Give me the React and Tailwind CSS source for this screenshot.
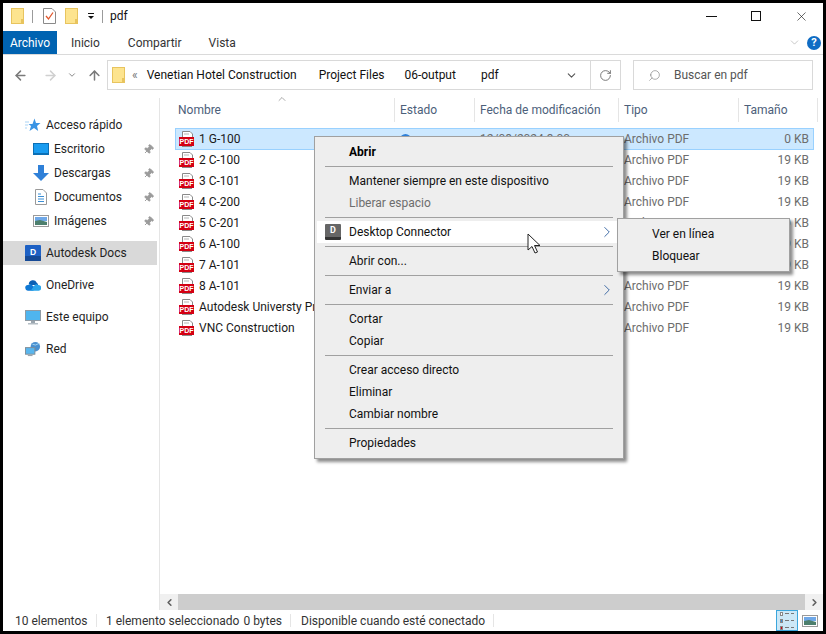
import React from 'react';
import { ChevronRight, ChevronDown, ChevronUp, ChevronLeft, ArrowLeft, ArrowRight, ArrowUp, RotateCw, Search, X, Pin } from 'lucide-react';

const files = [
  { name: '1 G-100', size: '0 KB', selected: true },
  { name: '2 C-100', size: '19 KB' },
  { name: '3 C-101', size: '19 KB' },
  { name: '4 C-200', size: '19 KB' },
  { name: '5 C-201', size: '19 KB' },
  { name: '6 A-100', size: '19 KB' },
  { name: '7 A-101', size: '19 KB' },
  { name: '8 A-101', size: '19 KB' },
  { name: 'Autodesk Universty Presentation', size: '19 KB' },
  { name: 'VNC Construction', size: '19 KB' },
];

const Folder = ({ className = '' }) => (
  <svg width="14" height="16" viewBox="0 0 14 16" className={className}>
    <rect x="0.5" y="0.5" width="12" height="15" fill="#fde48f" stroke="#e8c45e" />
    <rect x="10" y="11" width="3" height="5" fill="#e8c45e" />
  </svg>
);

const PdfIcon = () => (
  <svg width="16" height="16" viewBox="0 0 16 16" className="shrink-0">
    <path d="M3.5 0.5H11L13.5 3V7H3.5Z" fill="#fff" stroke="#8a8a8a" />
    <line x1="5" y1="3" x2="10" y2="3" stroke="#b5b5b5" />
    <rect x="0" y="6" width="15" height="9" fill="#d40012" />
    <text x="7.5" y="13.2" textAnchor="middle" fontSize="7" fontWeight="700" fill="#fff" fontFamily="Liberation Sans, sans-serif">PDF</text>
    <rect x="3" y="15" width="10" height="1" fill="#8a8a8a" />
  </svg>
);

const Star = () => (
  <svg width="16" height="16" viewBox="0 0 16 16">
    <path d="M9.5 1.5L11 6H15.5L12 9L13.2 14L9 11L4.5 14L6 9L3.5 7H7.5Z" fill="#3a94e4" />
    <path d="M0 5H4M0 8H3M0 11H2" stroke="#a9d3f5" />
  </svg>
);

const Desktop = () => (
  <svg width="16" height="14" viewBox="0 0 16 14">
    <rect x="0.5" y="1.5" width="15" height="11" fill="#1a9cf0" stroke="#0b6fb5" />
    <rect x="1" y="11" width="14" height="1" fill="#0b6fb5" />
  </svg>
);

const Download = () => (
  <svg width="16" height="16" viewBox="0 0 16 16">
    <path d="M5 0H11V8H16L8 16L0 8H5Z" fill="#2f80d8" />
  </svg>
);

const Doc = () => (
  <svg width="12" height="16" viewBox="0 0 12 16">
    <path d="M0.5 0.5H8L11.5 4V15.5H0.5Z" fill="#fff" stroke="#9a9a9a" />
    <path d="M3 5H6M3 7.5H9M3 10H9M3 12.5H9" stroke="#3b8fd6" />
  </svg>
);

const Picture = () => (
  <svg width="16" height="12" viewBox="0 0 16 12">
    <rect x="0.5" y="0.5" width="15" height="11" fill="#fff" stroke="#9a9a9a" />
    <rect x="2" y="2" width="12" height="4" fill="#6fa8e8" />
    <path d="M2 6L7 5L14 7V10H2Z" fill="#4d7f6d" />
  </svg>
);

const AutodeskDocs = () => (
  <svg width="16" height="16" viewBox="0 0 16 16">
    <rect width="16" height="16" rx="1" fill="#1e61c4" />
    <rect y="11" width="16" height="5" fill="#164a96" />
    <text x="8" y="9.5" textAnchor="middle" fontSize="8.5" fontWeight="700" fill="#fff" fontFamily="Liberation Sans, sans-serif">D</text>
  </svg>
);

const OneDrive = () => (
  <svg width="17" height="12" viewBox="0 0 17 12">
    <path d="M4 5a4.5 4.5 0 0 1 8.5-1.5A3.5 3.5 0 0 1 14 6H6Z" fill="#0a5fb4" />
    <path d="M3.5 12A3 3 0 0 1 3 6L6 5L10 8L9 12Z" fill="#0f78d4" />
    <path d="M6 12L10 6.5A3 3 0 0 1 14 6A3 3 0 0 1 14.5 12Z" fill="#2aa4ea" />
  </svg>
);

const Monitor = () => (
  <svg width="16" height="15" viewBox="0 0 16 15">
    <rect x="0.5" y="0.5" width="15" height="10" fill="#4fb5ef" stroke="#8f9ba5" />
    <rect x="6" y="11" width="4" height="2" fill="#9aa5ae" />
    <rect x="3" y="13" width="10" height="1.5" fill="#b4bdc4" />
  </svg>
);

const Network = () => (
  <svg width="17" height="17" viewBox="0 0 17 17">
    <circle cx="11" cy="5.5" r="5" fill="#4a90d0" />
    <path d="M8 3Q11 5 15 2" stroke="#a5d6f2" fill="none" />
    <rect x="0.5" y="6.5" width="10" height="7" fill="#59b6ee" stroke="#7f8c96" />
    <rect x="3" y="14" width="5" height="1.5" fill="#9aa5ae" />
  </svg>
);

const NavItem = ({ icon, label, pinned, active, className = '' }) => (
  <div className={`flex h-6 items-center ${active ? 'mr-[2px] bg-[#d9d9d9]' : ''} ${className}`}>
    <span className="flex w-4 items-center justify-center">{icon}</span>
    <span className="ml-[5px] flex-1 text-[#1f1f1f]">{label}</span>
    {pinned && <Pin size={11} className="mr-[3px] rotate-45 fill-[#9b9b9b] text-[#9b9b9b]" />}
  </div>
);

const Sep = () => (
  <div className="flex h-[7px] items-center pl-[8px] pr-[4px]">
    <div className="h-px w-full bg-[#a0a0a0]" />
  </div>
);

const MenuItem = ({ label, bold, disabled, active, arrow, icon }) => (
  <div className={`relative flex h-[22px] items-center pl-[32px] ${active ? 'bg-white' : ''}`}>
    {icon && <span className="absolute left-[8px] top-[3px]">{icon}</span>}
    <span className={`${bold ? 'font-bold text-black' : disabled ? 'text-[#6d6d6d]' : 'text-[#111]'}`}>{label}</span>
    {arrow && <ChevronRight size={18} strokeWidth={1.2} className="absolute right-[1px] top-[2px] text-[#2f5f9e]" />}
  </div>
);

const CursorArrow = () => (
  <svg width="14" height="21" viewBox="0 0 14 21">
    <path d="M1 1V17L5 13.5L8 20L10.5 19L7.5 12.5H13Z" fill="#fff" stroke="#222" strokeWidth="1" strokeLinejoin="miter" />
  </svg>
);

export default function App() {
  return (
    <div className="flex h-[634px] w-[826px] flex-col overflow-hidden bg-black p-[3px] font-['Roboto',sans-serif] text-[12px] leading-none">
      <div className="relative flex min-h-0 flex-1 flex-col bg-white">
        {/* Title bar */}
        <div className="flex h-[28px] shrink-0 items-center pb-[2px]">
          <Folder className="ml-2" />
          <div className="ml-[7px] h-[13px] w-px bg-[#9b9b9b]" />
          <svg width="13" height="16" viewBox="0 0 13 16" className="ml-[10px]">
            <path d="M0.5 0.5H9L12.5 4V15.5H0.5Z" fill="#fff" stroke="#8a8a8a" />
            <path d="M3 8L5.5 11L10 4.5" stroke="#e0562b" strokeWidth="1.3" fill="none" />
          </svg>
          <Folder className="ml-[9px]" />
          <svg width="8" height="8" viewBox="0 0 8 8" className="ml-[8px]">
            <rect x="1" y="1" width="6" height="1" fill="#111" />
            <path d="M1 4H7L4 7Z" fill="#111" />
          </svg>
          <div className="ml-[7px] h-[13px] w-px bg-[#9b9b9b]" />
          <span className="ml-[7px] text-[#111]">pdf</span>
          <div className="ml-auto flex items-center">
            <div className="h-px w-[11px] bg-[#111]" />
            <div className="ml-[34px] h-[10px] w-[10px] border border-[#111]" />
            <X size={15} strokeWidth={1} className="ml-[33px] mr-[14px] text-[#111]" />
          </div>
        </div>

        {/* Ribbon tabs */}
        <div className="flex h-[24px] shrink-0 items-stretch border-b border-[#dadada]">
          <div className="flex w-[54px] items-center justify-center bg-[#0063b1] text-white">Archivo</div>
          <span className="ml-[14px] flex items-center text-[#333]">Inicio</span>
          <span className="ml-[28px] flex items-center text-[#333]">Compartir</span>
          <span className="ml-[27px] flex items-center text-[#333]">Vista</span>
          <div className="ml-auto flex items-center">
            <ChevronDown size={13} strokeWidth={1} className="text-[#9b9b9b]" />
            <div className="ml-[6px] mr-[2px] flex h-[14px] w-[14px] items-center justify-center rounded-full bg-[#0f6cc4] text-[11px] font-bold text-white">?</div>
          </div>
        </div>

        {/* Address bar */}
        <div className="flex h-[43px] shrink-0 items-start pt-[5px]">
          <div className="flex h-[30px] items-center">
            <ArrowLeft size={15} strokeWidth={2.4} className="ml-[10px] text-[#7a7a7a]" />
            <ArrowRight size={15} strokeWidth={2.4} className="ml-[15px] text-[#d0d0d0]" />
            <ChevronDown size={10} strokeWidth={2.4} className="ml-[9px] text-[#8a8a8a]" />
            <ArrowUp size={15} strokeWidth={2.4} className="ml-[10px] text-[#7a7a7a]" />
          </div>
          <div className="ml-[5px] flex h-[30px] w-[514px] items-center border border-[#d9d9d9]">
            <Folder className="ml-[4px]" />
            <span className="ml-[6px] text-[#777]">«</span>
            <span className="ml-[9px] text-[#111]">Venetian Hotel Construction</span>
            <span className="ml-[22px] text-[#111]">Project Files</span>
            <span className="ml-[20px] text-[#111]">06-output</span>
            <span className="ml-[25px] text-[#111]">pdf</span>
            <ChevronDown size={13} strokeWidth={2} className="ml-auto mr-[12px] text-[#555]" />
            <div className="flex h-full w-[30px] items-center justify-center border-l border-[#d9d9d9]">
              <RotateCw size={13} strokeWidth={1.6} className="text-[#666]" />
            </div>
          </div>
          <div className="ml-[12px] flex h-[30px] w-[180px] items-center border border-[#d9d9d9]">
            <Search size={13} strokeWidth={1} className="ml-[14px] -scale-x-100 text-[#666]" />
            <span className="ml-[13px] text-[#555]">Buscar en pdf</span>
          </div>
        </div>

        {/* Body */}
        <div className="flex min-h-0 flex-1">
          <div className="flex w-[157px] shrink-0 flex-col border-r border-[#e5e5e5] pt-[15px]">
            <NavItem icon={<Star />} label="Acceso rápido" className="pl-[22px]" />
            <NavItem icon={<Desktop />} label="Escritorio" pinned className="pl-[30px] pr-[2px]" />
            <NavItem icon={<Download />} label="Descargas" pinned className="pl-[30px] pr-[2px]" />
            <NavItem icon={<Doc />} label="Documentos" pinned className="pl-[30px] pr-[2px]" />
            <NavItem icon={<Picture />} label="Imágenes" pinned className="pl-[30px] pr-[2px]" />
            <NavItem icon={<AutodeskDocs />} label="Autodesk Docs" active className="mt-2 pl-[22px]" />
            <NavItem icon={<OneDrive />} label="OneDrive" className="mt-2 pl-[22px]" />
            <NavItem icon={<Monitor />} label="Este equipo" className="mt-2 pl-[22px]" />
            <NavItem icon={<Network />} label="Red" className="mt-2 pl-[22px]" />
          </div>

          <div className="flex min-w-0 flex-1 flex-col">
            <div className="relative flex-1 pl-[15px]">
              <ChevronUp size={12} strokeWidth={1} className="absolute left-[116px] top-[-5px] text-[#555]" />
              {/* Column header */}
              <div className="grid h-[24px] w-[643px] grid-cols-[219px_80px_144px_120px_80px] text-[#4c607a]">
                <div className="flex items-center pl-[3px]">Nombre</div>
                <div className="flex items-center border-l border-[#e5e5e5] pl-[5px]">Estado</div>
                <div className="flex items-center border-l border-[#e5e5e5] pl-[5px]">Fecha de modificación</div>
                <div className="flex items-center border-l border-[#e5e5e5] pl-[5px]">Tipo</div>
                <div className="flex items-center border-x border-[#e5e5e5] pl-[5px]">Tamaño</div>
              </div>
              <div className="mt-[6px] flex w-[639px] flex-col">
                {files.map((f) => (
                  <div
                    key={f.name}
                    className={`-mb-px grid h-[22px] grid-cols-[219px_80px_144px_120px_74px] items-center border ${f.selected ? 'relative border-[#99d1ff] bg-[#cce8ff]' : 'border-transparent'}`}
                  >
                    <div className="flex items-center overflow-hidden pl-[3px]">
                      <PdfIcon />
                      <span className="ml-[4px] whitespace-nowrap text-[#1a1a1a]">{f.name}</span>
                    </div>
                    <div className="pl-[5px]">
                      {f.selected && <div className="h-[11px] w-[11px] rounded-full border-2 border-[#2f80d8]" />}
                    </div>
                    <div className="pl-[5px] text-[#6d6d6d]">{f.selected ? '12/08/2024 3:00' : ''}</div>
                    <div className="pl-[5px] text-[#6d6d6d]">Archivo PDF</div>
                    <div className="pr-[4px] text-right text-[#6d6d6d]">{f.size}</div>
                  </div>
                ))}
              </div>
            </div>
            {/* Horizontal scrollbar */}
            <div className="flex h-[16px] shrink-0 items-stretch bg-[#f0f0f0]">
              <div className="flex w-[18px] items-center justify-center">
                <ChevronLeft size={11} strokeWidth={3.5} className="text-[#606060]" />
              </div>
              <div className="flex-1 bg-[#cdcdcd]" />
              <div className="flex w-[18px] items-center justify-center">
                <ChevronRight size={11} strokeWidth={3.5} className="text-[#606060]" />
              </div>
            </div>
          </div>
        </div>

        {/* Status bar */}
        <div className="flex h-[21px] shrink-0 items-center text-[#333]">
          <span className="ml-3 w-[81px]">10 elementos</span>
          <div className="h-[13px] w-px bg-[#e5e5e5]" />
          <span className="ml-[9px] flex w-[184px] gap-[4px]">
            <span>1 elemento seleccionado</span>
            <span>0 bytes</span>
          </span>
          <div className="h-[13px] w-px bg-[#e5e5e5]" />
          <span className="ml-[10px] w-[192px]">Disponible cuando esté conectado</span>
          <div className="h-[13px] w-px bg-[#e5e5e5]" />
          <div className="ml-auto mr-[5px] flex h-full items-center">
            <div className="flex h-full w-[22px] flex-col justify-center gap-[3px] border border-[#3ba6dc] bg-[#cce8f7] px-[3px]">
              <div className="flex items-center gap-[2px]"><div className="h-[4px] w-[4px] border border-[#888] bg-white" /><div className="h-px w-[5px] bg-[#777]" /><div className="h-px w-[5px] bg-[#777]" /></div>
              <div className="flex items-center gap-[2px]"><div className="h-[4px] w-[4px] border border-[#888] bg-[#3b8fd6]" /><div className="h-px w-[5px] bg-[#777]" /><div className="h-px w-[5px] bg-[#777]" /></div>
              <div className="flex items-center gap-[2px]"><div className="h-[4px] w-[4px] border border-[#888] bg-[#d40012]" /><div className="h-px w-[5px] bg-[#777]" /><div className="h-px w-[5px] bg-[#777]" /></div>
            </div>
            <div className="ml-[4px]"><Picture /></div>
          </div>
        </div>

        {/* Context menu */}
        <div className="absolute left-[311px] top-[133px] w-[310px] border border-[#a0a0a0] bg-[#eeeeee] py-[4px] pl-[2px] pr-[6px] shadow-[3px_3px_3px_rgba(0,0,0,0.45)]">
          <MenuItem label="Abrir" bold />
          <Sep />
          <MenuItem label="Mantener siempre en este dispositivo" />
          <MenuItem label="Liberar espacio" disabled />
          <Sep />
          <MenuItem
            label="Desktop Connector"
            active
            arrow
            icon={
              <span className="flex h-[16px] w-[16px] items-center justify-center rounded-[1px] border-b-[3px] border-[#333] bg-[#666] text-[9px] font-bold text-white">D</span>
            }
          />
          <Sep />
          <MenuItem label="Abrir con..." />
          <Sep />
          <MenuItem label="Enviar a" arrow />
          <Sep />
          <MenuItem label="Cortar" />
          <MenuItem label="Copiar" />
          <Sep />
          <MenuItem label="Crear acceso directo" />
          <MenuItem label="Eliminar" />
          <MenuItem label="Cambiar nombre" />
          <Sep />
          <MenuItem label="Propiedades" />
        </div>

        {/* Submenu */}
        <div className="absolute left-[614px] top-[215px] w-[173px] border border-[#a0a0a0] bg-[#eeeeee] py-[4px] shadow-[3px_3px_3px_rgba(0,0,0,0.45)]">
          <div className="flex h-[22px] items-center pl-[34px] text-[#111]">Ver en línea</div>
          <div className="flex h-[22px] items-center pl-[34px] text-[#111]">Bloquear</div>
        </div>

        {/* Mouse pointer */}
        <div className="absolute left-[524px] top-[230px]">
          <CursorArrow />
        </div>
      </div>
    </div>
  );
}
